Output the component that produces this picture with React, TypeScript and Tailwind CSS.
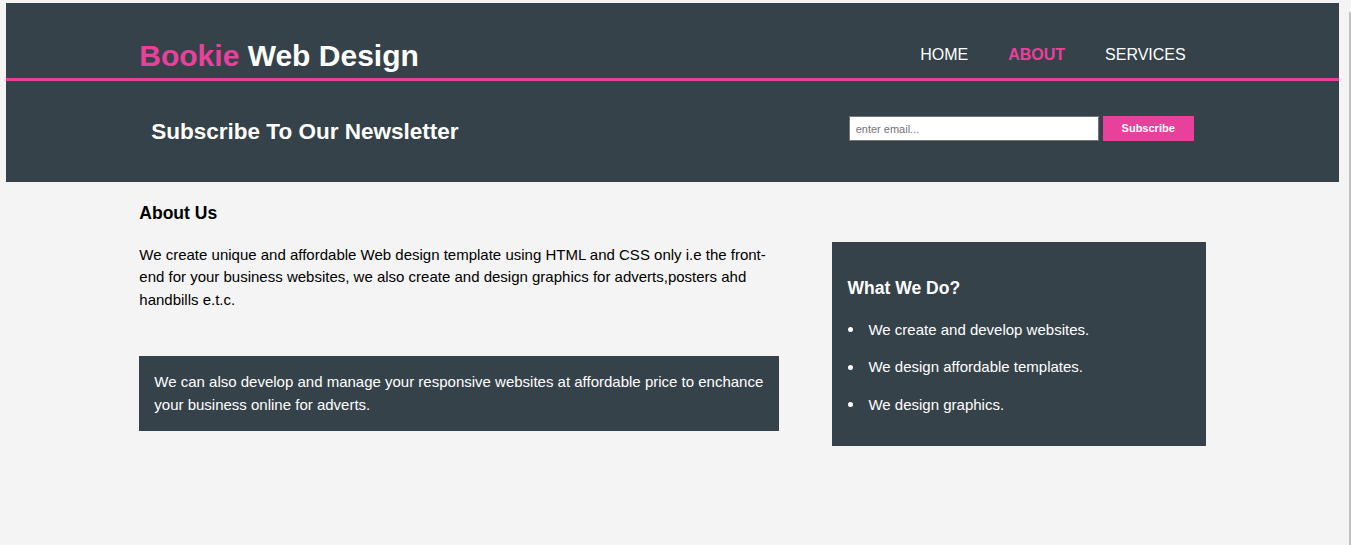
const navLinks = [
  { label: "Home", current: false },
  { label: "About", current: true },
  { label: "Services", current: false },
]

const services = [
  "We create and develop websites.",
  "We design affordable templates.",
  "We design graphics.",
]

export default function App() {
  return (
    <div className="relative min-h-[545px] bg-[#f4f4f4] pl-[6px] pt-[3px] font-['Liberation_Sans',Arial,sans-serif] text-[15px] leading-[1.5] text-black">
      <div className="w-[1333px]">
        <header className="border-b-[3px] border-[#e8419c] bg-[#35424a] pt-[30px] text-white">
          <div className="mx-auto flex w-[80%] justify-between">
            <h1 className="text-[30px] font-bold leading-[45px]">
              <span className="text-[#e8419c]">Bookie</span> Web Design
            </h1>
            <nav className="mt-[11px]">
              <ul className="flex">
                {navLinks.map((link) => (
                  <li key={link.label} className="px-5">
                    <a
                      href="#"
                      className={
                        link.current
                          ? "text-[16px] font-bold uppercase leading-[22.5px] text-[#e8419c]"
                          : "text-[16px] uppercase leading-[22.5px] text-white"
                      }
                    >
                      {link.label}
                    </a>
                  </li>
                ))}
              </ul>
            </nav>
          </div>
        </header>

        <section className="bg-[#35424a] p-[15px] text-white">
          <div className="mx-auto flex w-[80%] items-start justify-between">
            <h1 className="my-[18.7px] text-[22.5px] font-bold leading-[1.5]">
              Subscribe To Our Newsletter
            </h1>
            <form className="mt-[20px] flex items-start gap-[4px]">
              <input
                type="email"
                placeholder="enter email..."
                className="h-[25px] w-[250px] border border-[#767676] bg-white px-[6px] text-[11px] text-black placeholder:text-[#757575]"
              />
              <button
                type="button"
                className="h-[25px] w-[91px] bg-[#e8419c] text-[11px] font-bold text-white"
              >
                Subscribe
              </button>
            </form>
          </div>
        </section>

        <div className="mx-auto flex w-[80%] items-start justify-between">
          <article className="w-[60%]">
            <h1 className="my-[17.55px] text-[17.55px] font-bold leading-[1.5]">About Us</h1>
            <p>
              We create unique and affordable Web design template using HTML and CSS only i.e the
              front-end for your business websites, we also create and design graphics for
              adverts,posters ahd handbills e.t.c.
            </p>
            <p className="mt-[45px] bg-[#35424a] p-[15px] text-white">
              We can also develop and manage your responsive websites at affordable price to
              enchance your business online for adverts.
            </p>
          </article>

          <aside className="mt-[60px] w-[35%] bg-[#35424a] p-[15px] text-white">
            <h3 className="my-[17.55px] text-[17.55px] font-bold leading-[1.5]">What We Do?</h3>
            <ul className="mb-[15px] flex flex-col gap-[15px]">
              {services.map((item) => (
                <li key={item} className="flex items-center">
                  <span className="ml-[1px] mr-[15px] h-[5px] w-[5px] rounded-full bg-white" />
                  {item}
                </li>
              ))}
            </ul>
          </aside>
        </div>
      </div>

      <div className="absolute bottom-0 right-0 top-[12px] w-[2px] bg-[#c1c1c1]" />
    </div>
  )
}
